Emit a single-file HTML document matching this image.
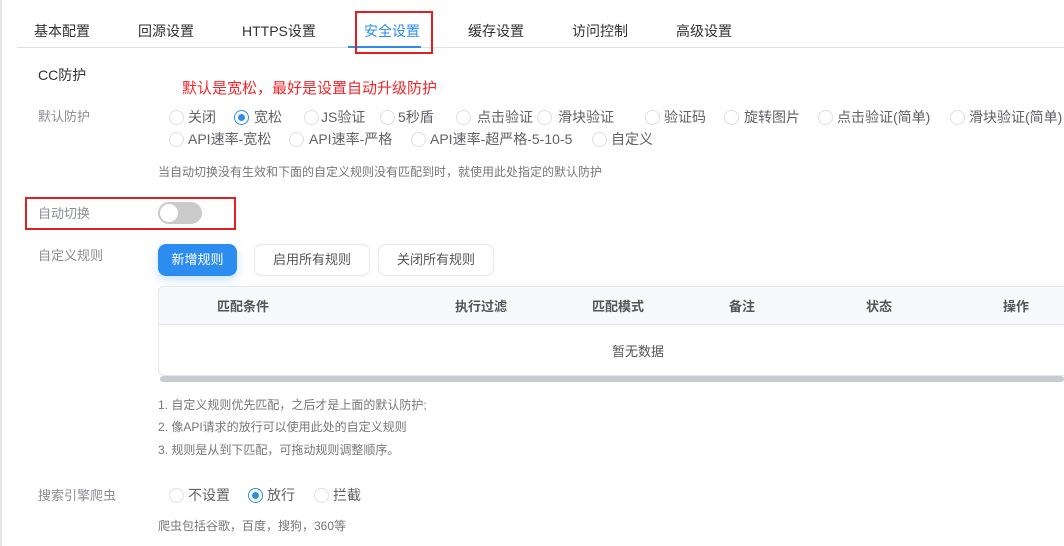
<!DOCTYPE html>
<html><head><meta charset="utf-8"><style>
*{margin:0;padding:0;box-sizing:border-box}
body{width:1064px;height:546px;background:#fff;font-family:"Liberation Sans","Noto Sans CJK SC",sans-serif;position:relative;overflow:hidden;color:#606266}
.a{position:absolute;white-space:nowrap}
.tab{font-size:14px;color:#303133;top:21px}
.lbl{font-size:13px;color:#8a8d93}
.c{position:absolute;width:15px;height:15px;border:1px solid #dcdfe6;border-radius:50%}
.c.on{border-color:#2d8cf0}
.c.on:after{content:"";position:absolute;left:3px;top:3px;width:7px;height:7px;border-radius:50%;background:#2d8cf0}
.t{position:absolute;font-size:14px;color:#606266;white-space:nowrap;line-height:16px}
.hint{font-size:12px;color:#777}
.th{font-size:13px;color:#555;font-weight:bold;top:296px}
</style></head><body>
<div class="a" style="left:0;top:0;width:2px;height:546px;background:#e5e5e5"></div>
<div class="a tab" style="left:34px">基本配置</div>
<div class="a tab" style="left:138px">回源设置</div>
<div class="a tab" style="left:242px">HTTPS设置</div>
<div class="a tab" style="left:364px;color:#2d8cf0">安全设置</div>
<div class="a tab" style="left:468px">缓存设置</div>
<div class="a tab" style="left:572px">访问控制</div>
<div class="a tab" style="left:676px">高级设置</div>
<div class="a" style="left:17px;top:47px;width:1047px;height:1px;background:#dcdfe6"></div>
<div class="a" style="left:348px;top:46px;width:73px;height:2px;background:#2d8cf0"></div>
<div class="a" style="left:355px;top:11px;width:78px;height:43px;border:2px solid #e02020"></div>

<div class="a" style="left:38px;top:65px;font-size:14px;color:#303133">CC防护</div>
<div class="a" style="left:182px;top:77px;font-size:15px;color:#f0262a">默认是宽松，最好是设置自动升级防护</div>
<div class="a lbl" style="left:38px;top:106px">默认防护</div>

<div class="c" style="left:169px;top:110px"></div><div class="t" style="left:188px;top:109px">关闭</div>
<div class="c on" style="left:234px;top:110px"></div><div class="t" style="left:254px;top:109px">宽松</div>
<div class="c" style="left:304px;top:110px"></div><div class="t" style="left:321px;top:109px">JS验证</div>
<div class="c" style="left:380px;top:110px"></div><div class="t" style="left:398px;top:109px">5秒盾</div>
<div class="c" style="left:456px;top:110px"></div><div class="t" style="left:477px;top:109px">点击验证</div>
<div class="c" style="left:537px;top:110px"></div><div class="t" style="left:558px;top:109px">滑块验证</div>
<div class="c" style="left:645px;top:110px"></div><div class="t" style="left:664px;top:109px">验证码</div>
<div class="c" style="left:724px;top:110px"></div><div class="t" style="left:744px;top:109px">旋转图片</div>
<div class="c" style="left:818px;top:110px"></div><div class="t" style="left:837px;top:109px">点击验证(简单)</div>
<div class="c" style="left:950px;top:110px"></div><div class="t" style="left:969px;top:109px">滑块验证(简单)</div>
<div class="c" style="left:169px;top:132px"></div><div class="t" style="left:188px;top:131px">API速率-宽松</div>
<div class="c" style="left:289px;top:132px"></div><div class="t" style="left:309px;top:131px">API速率-严格</div>
<div class="c" style="left:411px;top:132px"></div><div class="t" style="left:430px;top:131px">API速率-超严格-5-10-5</div>
<div class="c" style="left:592px;top:132px"></div><div class="t" style="left:611px;top:131px">自定义</div>
<div class="a hint" style="left:158px;top:163px">当自动切换没有生效和下面的自定义规则没有匹配到时，就使用此处指定的默认防护</div>

<div class="a" style="left:25px;top:197px;width:211px;height:33px;border:2px solid #e02020"></div>
<div class="a lbl" style="left:38px;top:203px">自动切换</div>
<div class="a" style="left:158px;top:202px;width:44px;height:22px;border-radius:11px;background:#cacaca"><div style="position:absolute;left:2px;top:2px;width:18px;height:18px;border-radius:50%;background:#fff"></div></div>

<div class="a lbl" style="left:38px;top:245px">自定义规则</div>
<div class="a" style="left:158px;top:244px;width:79px;height:32px;border-radius:8px;background:#2d8cf0;color:#fff;font-size:13px;text-align:center;line-height:32px;box-shadow:0 4px 10px rgba(45,140,240,.25)">新增规则</div>
<div class="a" style="left:254px;top:244px;width:116px;height:32px;border-radius:8px;border:1px solid #e4e7ed;color:#555;font-size:13px;text-align:center;line-height:30px">启用所有规则</div>
<div class="a" style="left:378px;top:244px;width:116px;height:32px;border-radius:8px;border:1px solid #e4e7ed;color:#555;font-size:13px;text-align:center;line-height:30px">关闭所有规则</div>
<div class="a" style="left:158px;top:286px;width:920px;height:90px;border:1px solid #e4e7ed;border-radius:6px"></div>
<div class="a" style="left:159px;top:287px;width:910px;height:38px;background:#f8f9fb;border-bottom:1px solid #e4e7ed;border-radius:6px 0 0 0"></div>
<div class="a th" style="left:217px">匹配条件</div>
<div class="a th" style="left:455px">执行过滤</div>
<div class="a th" style="left:592px">匹配模式</div>
<div class="a th" style="left:729px">备注</div>
<div class="a th" style="left:866px">状态</div>
<div class="a th" style="left:1003px">操作</div>
<div class="a" style="left:612px;top:341px;font-size:13px;color:#555">暂无数据</div>
<div class="a" style="left:160px;top:376px;width:904px;height:6px;border-radius:3px;background:#c8cbd0"></div>

<div class="a hint" style="left:158px;top:396px">1. 自定义规则优先匹配，之后才是上面的默认防护;</div>
<div class="a hint" style="left:158px;top:418px">2. 像API请求的放行可以使用此处的自定义规则</div>
<div class="a hint" style="left:158px;top:441px">3. 规则是从到下匹配，可拖动规则调整顺序。</div>

<div class="a lbl" style="left:38px;top:485px">搜索引擎爬虫</div>
<div class="c" style="left:169px;top:488px"></div><div class="t" style="left:188px;top:487px">不设置</div>
<div class="c on" style="left:248px;top:488px"></div><div class="t" style="left:267px;top:487px">放行</div>
<div class="c" style="left:314px;top:488px"></div><div class="t" style="left:333px;top:487px">拦截</div>
<div class="a hint" style="left:158px;top:517px">爬虫包括谷歌，百度，搜狗，360等</div>
</body></html>
